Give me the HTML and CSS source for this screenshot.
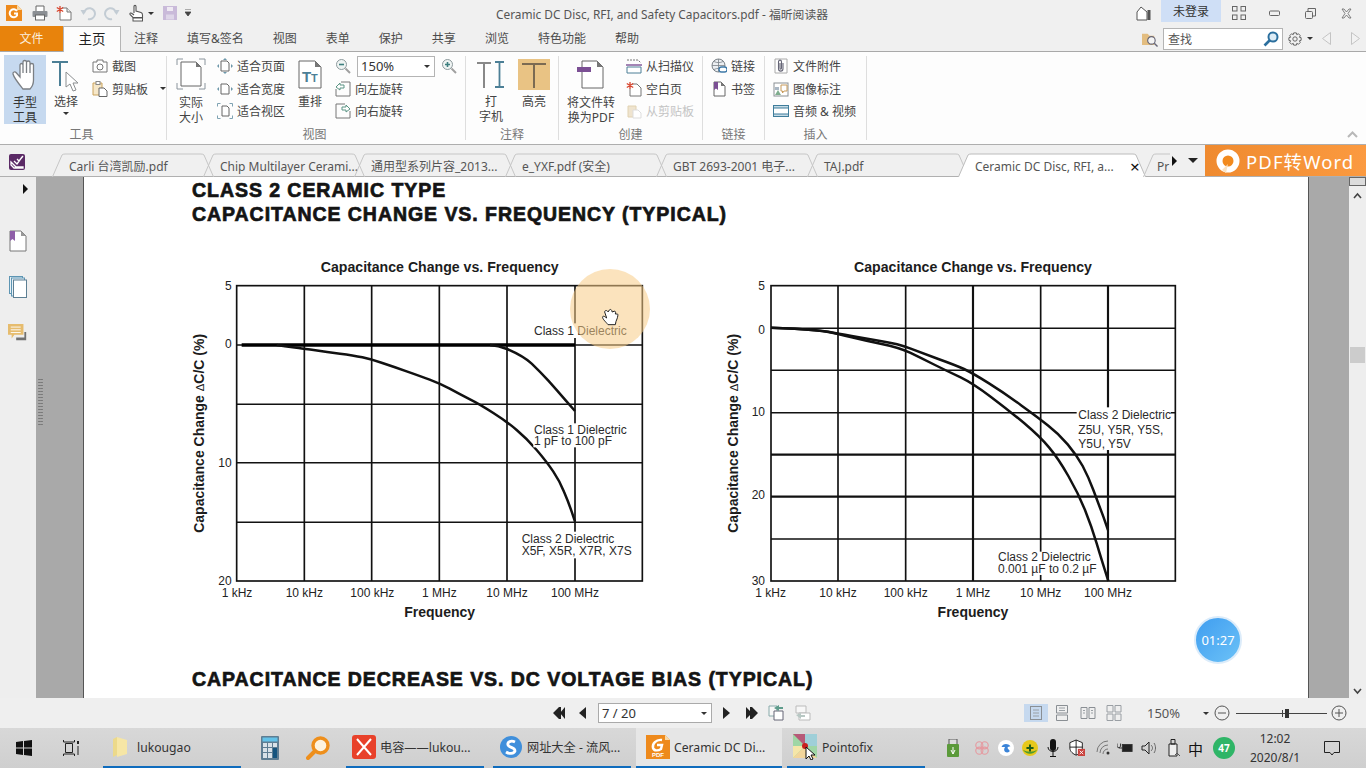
FILE: index.html
```html
<!DOCTYPE html>
<html lang="zh">
<head>
<meta charset="utf-8">
<title>Ceramic DC Disc, RFI, and Safety Capacitors.pdf - 福昕阅读器</title>
<link rel="stylesheet" href="styles.css">
</head>
<body>
<div class="app">
  <header class="titlebar">
    <div class="qa">
      <svg class="i16" viewBox="0 0 16 16"><path d="M0 0H11L16 5V16H0Z" fill="#ee8a1c"/><path d="M11 0L16 5H11Z" fill="#f8d9a8"/><path d="M11 6A4 4 0 1 0 11 10.500V8.500H8" fill="none" stroke="#fff" stroke-width="2"/></svg>
      <svg class="i16 ml10" viewBox="0 0 16 16"><path d="M4 6V1H12V6" fill="#fff" stroke="#666"/><rect x="0.500" y="6" width="15" height="6" rx="1" fill="#8b8f94"/><rect x="3.500" y="10" width="9" height="5" fill="#fff" stroke="#666"/></svg>
      <svg class="i16 ml8" viewBox="0 0 16 16"><path d="M6 3H11L15 7V15H4V8" fill="#fff" stroke="#777"/><path d="M11 3V7H15" fill="#eee" stroke="#777"/><path d="M4 1V8M0.800 2.500L7.200 6.500M7.200 2.500L0.800 6.500" stroke="#d8452e" stroke-width="1.300"/></svg>
      <svg class="i16 ml8" viewBox="0 0 16 16"><path d="M4 8A5.500 5.500 0 1 1 8 14" fill="none" stroke="#c3ccd4" stroke-width="2"/><path d="M0.500 5H6.500L3.500 10Z" fill="#c3ccd4"/></svg>
      <svg class="i16 ml8" viewBox="0 0 16 16"><path d="M12 8A5.500 5.500 0 1 0 8 14" fill="none" stroke="#c3ccd4" stroke-width="2"/><path d="M9.500 5H15.500L12.500 10Z" fill="#c3ccd4"/></svg>
      <svg class="i18 ml8" viewBox="0 0 18 18"><path d="M6 9V2.500C6 1 8 1 8 2.500V7L13 8.500C14.500 9 14.500 10 14.500 11V13.500H5L2 10.500C1.500 9 3 8.500 4 9.500L6 11" fill="#fff" stroke="#555" stroke-width="1.100"/><rect x="5" y="14" width="9.500" height="3" fill="#fff" stroke="#555"/></svg>
      <span class="caret-s"></span>
      <svg class="i14 ml9" viewBox="0 0 14 14"><path d="M0 0H14V14H0Z" fill="#c9bad9"/><rect x="4" y="1" width="6" height="4" fill="#efeaf3"/><rect x="3" y="8.500" width="8" height="5" fill="#ded6e8"/></svg>
      <svg class="qa-more" viewBox="0 0 6 8"><path d="M0 0H6M0 3H6L3 7Z" fill="#444" stroke="#444" stroke-width="0.800"/></svg>
    </div>
    <div class="doc-title">Ceramic DC Disc, RFI, and Safety Capacitors.pdf - 福昕阅读器</div>
    <div class="win">
      <svg class="i16" viewBox="0 0 16 16"><path d="M1 7L5 2L11 7V15H1Z" fill="#fff" stroke="#555"/><rect x="11.500" y="5" width="3" height="10" fill="#555"/></svg>
      <div class="login">未登录</div>
      <svg class="i14" viewBox="0 0 14 14"><g fill="none" stroke="#666"><rect x="0.500" y="0.500" width="4.500" height="4.500"/><rect x="9" y="0.500" width="4.500" height="4.500"/><rect x="0.500" y="9" width="4.500" height="4.500"/><rect x="9" y="9" width="4.500" height="4.500"/></g></svg>
      <svg class="i11 ml23" viewBox="0 0 11 11"><rect x="0.500" y="3" width="10" height="4.500" rx="1" fill="none" stroke="#666"/></svg>
      <svg class="i11 ml25" viewBox="0 0 11 11"><rect x="0.500" y="3.500" width="7" height="7" rx="1" fill="#eee" stroke="#666"/><path d="M3 3V0.500H10.500V8H8" fill="none" stroke="#666"/></svg>
      <svg class="i11 ml25" viewBox="0 0 11 11"><path d="M1 1H3L5.500 4L8 1H10L7 5.500L10 10H8L5.500 7L3 10H1L4 5.500Z" fill="#f3f3f3" stroke="#666" stroke-width="0.800"/></svg>
    </div>
  </header>

  <nav class="menubar">
    <div class="menu-file">文件</div>
    <div class="menu-item active">主页</div>
    <div class="menu-item first">注释</div>
    <div class="menu-item">填写&amp;签名</div>
    <div class="menu-item">视图</div>
    <div class="menu-item">表单</div>
    <div class="menu-item">保护</div>
    <div class="menu-item">共享</div>
    <div class="menu-item">浏览</div>
    <div class="menu-item">特色功能</div>
    <div class="menu-item">帮助</div>
    <div class="menu-tools">
      <svg class="i16" viewBox="0 0 17 17"><path d="M0 3H6L8 5H13V15H0Z" fill="#e3bd80"/><circle cx="10" cy="10" r="4" fill="#f4f4f4" stroke="#667" stroke-width="1.200"/><path d="M13 13L16.500 16.500" stroke="#667" stroke-width="1.500"/></svg>
      <div class="search"><span>查找</span><svg class="i16" viewBox="0 0 16 16"><circle cx="10" cy="6" r="4.500" fill="#dcecf6" stroke="#2b6f9e" stroke-width="2"/><path d="M6.500 9.500L1.500 14.500" stroke="#2b6f9e" stroke-width="2.600"/></svg></div>
      <svg class="i14 ml5" viewBox="0 0 16 16"><circle cx="8" cy="8" r="2.500" fill="none" stroke="#555"/><path d="M6.500 1H9.500L10 3L12 2L14 4.200L13 6L15 6.500V9.500L13 10L14 12L12 14L10 13L9.500 15H6.500L6 13L4 14L2 12L3 10L1 9.500V6.500L3 6L2 4.200L4 2L6 3Z" fill="none" stroke="#555"/></svg>
      <span class="caret-s ml5"></span>
      <svg class="nav-tri ml9" viewBox="0 0 9 13"><path d="M8.500 0.500V12.500L0.500 6.500Z" fill="#f2f2f2" stroke="#c4c4c4"/></svg>
      <svg class="nav-tri ml20" viewBox="0 0 9 13"><path d="M0.500 0.500V12.500L8.500 6.500Z" fill="#f2f2f2" stroke="#c4c4c4"/></svg>
    </div>
  </nav>

  <section class="ribbon">
    <div class="group g-tools">
      <div class="group-body">
        <div class="big hand-btn">
          <svg class="i36" viewBox="0 0 36 36"><path d="M12 32C8 27 3 21 2 17C1.500 15 4 14 5.500 16L9 20V8C9 6 12 6 12 8V16V5C12 3 15.500 3 15.500 5V16V5.500C15.500 3.500 19 3.500 19 5.500V16V8C19 6 22.500 6 22.500 8V23C22.500 27 21 30 19 32Z" transform="translate(4 0)" fill="#fff" stroke="#7b7f84" stroke-width="1.300"/></svg>
          <span>手型<br>工具</span>
        </div>
        <div class="big sel-btn">
          <svg class="i30" viewBox="0 0 30 32"><path d="M1 2H17M9 2V26" stroke="#4c7f96" stroke-width="2" fill="none"/><path d="M15 12V27L19 24L22 31L25 30L22 23H27Z" fill="#fff" stroke="#8b8e90"/></svg>
          <span class="sel-text">选择</span>
          <span class="caret-s sel-caret"></span>
        </div>
        <div class="col col-tools">
          <div class="row"><svg class="i16" viewBox="0 0 16 16"><path d="M1 4H5V2H11V4H15V14H1Z" fill="#fff" stroke="#777"/><circle cx="8" cy="9" r="3" fill="none" stroke="#777"/></svg><span>截图</span></div>
          <div class="row"><svg class="i16" viewBox="0 0 16 16"><path d="M3 2H10V14H1V2Z" fill="#f6e7c8" stroke="#caa35c"/><rect x="4" y="0.500" width="4" height="3" fill="#fff" stroke="#888"/><path d="M7 7H12L15 10V15.500H7Z" fill="#fff" stroke="#666"/></svg><span>剪贴板</span><span class="caret-s ml8"></span></div>
        </div>
      </div>
      <div class="group-label">工具</div>
    </div>

    <div class="group g-view">
      <div class="group-body">
        <div class="big act-btn">
          <svg class="i30" viewBox="0 0 30 32"><path d="M1 7V1H7M23 1H29V7M29 25V31H23M7 31H1V25" fill="none" stroke="#8a949c"/><path d="M5 4H20L25 9V28H5Z" fill="#fff" stroke="#666"/><path d="M20 4V9H25Z" fill="#777"/></svg>
          <span>实际<br>大小</span>
        </div>
        <div class="col col-fit">
          <div class="row"><svg class="i16" viewBox="0 0 16 16"><path d="M4 3H10L12 5V13H4Z" fill="#fff" stroke="#666"/><path d="M8 0L10 2H6ZM8 16L10 14H6ZM0 8L2 6V10ZM16 8L14 6V10Z" fill="#6d97aa"/></svg><span>适合页面</span></div>
          <div class="row"><svg class="i16" viewBox="0 0 16 16"><path d="M4 3H10L12 5V13H4Z" fill="#fff" stroke="#666"/><path d="M0 8L2 6V10ZM16 8L14 6V10Z" fill="#6d97aa"/></svg><span>适合宽度</span></div>
          <div class="row"><svg class="i16" viewBox="0 0 16 16"><path d="M5 3H10L12 5V13H5Z" fill="#fff" stroke="#666"/><path d="M0.500 3.500V0.500H3.500M12.500 0.500H15.500V3.500M15.500 12.500V15.500H12.500M3.500 15.500H0.500V12.500" fill="none" stroke="#7fa3b3"/></svg><span>适合视区</span></div>
        </div>
        <div class="big reflow-btn">
          <svg class="i30 reflow-ic" viewBox="0 0 24 30"><path d="M1 1H17L23 7V28H1Z" fill="#fff" stroke="#666"/><path d="M17 1V7H23Z" fill="#777"/><text class="tt1" x="4" y="22">T</text><text class="tt2" x="13" y="22">T</text></svg>
          <span>重排</span>
        </div>
        <div class="col col-zoom">
          <div class="row zoom-row">
            <svg class="i16" viewBox="0 0 16 16"><circle cx="6.500" cy="6.500" r="5" fill="#eff4f3" stroke="#8d9a9d"/><path d="M4 6.500H9" stroke="#3d7f7f" stroke-width="1.600"/><path d="M10.500 10.500L15 15" stroke="#a0a0a0" stroke-width="2"/></svg>
            <div class="zoom-select">150%<span class="caret-s"></span></div>
            <svg class="i16" viewBox="0 0 16 16"><circle cx="6.500" cy="6.500" r="5" fill="#eff4f3" stroke="#8d9a9d"/><path d="M4 6.500H9M6.500 4V9" stroke="#3d7f7f" stroke-width="1.600"/><path d="M10.500 10.500L15 15" stroke="#a0a0a0" stroke-width="2"/></svg>
          </div>
          <div class="row"><svg class="i16" viewBox="0 0 16 16"><path d="M6 1H15V15H6M1 8V15H6" fill="none" stroke="#777"/><path d="M1 6L5 2V4H9V7H5V9Z" fill="#fff" stroke="#5b9484"/></svg><span>向左旋转</span></div>
          <div class="row"><svg class="i16" viewBox="0 0 16 16"><path d="M10 1H1V15H15V8" fill="none" stroke="#777"/><path d="M15 6L11 2V4H7V7H11V9Z" fill="#fff" stroke="#5b9484"/></svg><span>向右旋转</span></div>
        </div>
      </div>
      <div class="group-label">视图</div>
    </div>

    <div class="group g-note">
      <div class="group-body">
        <div class="big type-btn">
          <svg class="i36 type-ic" viewBox="0 0 30 30"><path d="M1 3H15M8 3V28" fill="none" stroke="#888" stroke-width="2"/><path d="M19 2H28M23.500 2V27M19 27H28" fill="none" stroke="#4c7f96" stroke-width="1.800"/></svg>
          <span>打<br>字机</span>
        </div>
        <div class="big mark-btn">
          <div class="mark-ic"><svg class="i30" viewBox="0 0 30 30"><path d="M3 4H27M15 4V28" fill="none" stroke="#7b6a52" stroke-width="2"/></svg></div>
          <span>高亮</span>
        </div>
      </div>
      <div class="group-label">注释</div>
    </div>

    <div class="group g-create">
      <div class="group-body">
        <div class="big conv-btn">
          <svg class="i30 conv-ic" viewBox="0 0 28 30"><path d="M5 1H20L26 7V28H5Z" fill="#fff" stroke="#666"/><path d="M20 1V7H26Z" fill="#777"/><rect x="0" y="7" width="14" height="5" fill="#7b4f94"/></svg>
          <span>将文件转<br>换为PDF</span>
        </div>
        <div class="col col-create">
          <div class="row"><svg class="i16" viewBox="0 0 16 16"><path d="M1 2H12L15 5" fill="none" stroke="#777" stroke-dasharray="2 1"/><path d="M1 9H15V15H1Z" fill="#fff" stroke="#4c7f96"/><path d="M0 7H16" stroke="#7b4f94" stroke-width="1.400"/></svg><span>从扫描仪</span></div>
          <div class="row"><svg class="i16" viewBox="0 0 16 16"><path d="M6 3H11L15 7V15H4V8" fill="#fff" stroke="#777"/><path d="M4 1V8M0.800 2.500L7.200 6.500M7.200 2.500L0.800 6.500" stroke="#d8452e" stroke-width="1.300"/></svg><span>空白页</span></div>
          <div class="row off"><svg class="i16" viewBox="0 0 16 16"><path d="M2 3H10V14H2Z" fill="#efe4cf" stroke="#e1d2b2"/><path d="M7 7H12L15 10V15H7Z" fill="#fff" stroke="#ddd"/></svg><span>从剪贴板</span></div>
        </div>
      </div>
      <div class="group-label">创建</div>
    </div>

    <div class="group g-link">
      <div class="group-body">
        <div class="col col-link">
          <div class="row"><svg class="i16" viewBox="0 0 16 16"><circle cx="7.500" cy="7.500" r="6.500" fill="#eceff2" stroke="#7b8288"/><path d="M1 7.500H14M7.500 1V14M3 3.500C6 5 9 5 12 3.500M3 11.500C6 10 9 10 12 11.500" stroke="#7b8288" fill="none" stroke-width="0.800"/><rect x="8" y="9" width="8" height="5" rx="2.500" fill="#fff" stroke="#3e79a8" stroke-width="1.300"/></svg><span>链接</span></div>
          <div class="row"><svg class="i16" viewBox="0 0 16 16"><path d="M3 1H10L14 5V15H3Z" fill="#fff" stroke="#666"/><path d="M10 1V5H14Z" fill="#777"/><path d="M3 1H7V9L5 7.500L3 9Z" fill="#7b4f94"/></svg><span>书签</span></div>
        </div>
      </div>
      <div class="group-label">链接</div>
    </div>

    <div class="group g-insert">
      <div class="group-body">
        <div class="col col-insert">
          <div class="row"><svg class="i16" viewBox="0 0 16 16"><path d="M2 1H14V15H2Z" fill="#fff" stroke="#aaa"/><path d="M10 5V10.500C10 14 5.500 14 5.500 10.500V4C5.500 1.500 8.500 1.500 8.500 4V10C8.500 11.500 7 11.500 7 10V5" fill="none" stroke="#667" stroke-width="1.100"/></svg><span>文件附件</span></div>
          <div class="row"><svg class="i16" viewBox="0 0 16 16"><rect x="1" y="2" width="14" height="13" fill="#fff" stroke="#8a9094"/><path d="M2 14L5 9L8 14Z" fill="#7fae8e"/><rect x="2" y="6" width="4" height="3" fill="#a9b7c4"/><path d="M8 4H14V10H11L9.500 12V10H8Z" fill="#fff" stroke="#c79a5a"/></svg><span>图像标注</span></div>
          <div class="row"><svg class="i16" viewBox="0 0 16 16"><rect x="0.500" y="2.500" width="15" height="11" fill="#fff" stroke="#3f7d9b"/><rect x="0.500" y="2.500" width="15" height="2.500" fill="#c5dbe6" stroke="#3f7d9b"/><rect x="0.500" y="11" width="15" height="2.500" fill="#c5dbe6" stroke="#3f7d9b"/></svg><span>音频 &amp; 视频</span></div>
        </div>
      </div>
      <div class="group-label">插入</div>
    </div>

    <svg class="collapse" viewBox="0 0 11 7"><path d="M1 6L5.500 1.500L10 6" fill="none" stroke="#b8b8b8" stroke-width="2"/></svg>
  </section>

  <section class="tabbar">
    <svg class="tabs-logo" viewBox="0 0 16 16"><rect width="16" height="16" rx="2" fill="#5b2a66"/><path d="M2 8L7 13H14V14H5L2 11ZM5 7L8 10L13 3M8 5L10 7L14 2" fill="none" stroke="#fff" stroke-width="1.300"/></svg>
    <div class="tabs">
      <div class="tab"><svg class="tab-shape" viewBox="0 0 162 25"><path d="M0 25L10 2Q11 1 13 1H149Q151 1 152 2L162 25"/></svg><span>Carli 台湾凯励.pdf</span></div>
      <div class="tab"><svg class="tab-shape" viewBox="0 0 162 25"><path d="M0 25L10 2Q11 1 13 1H149Q151 1 152 2L162 25"/></svg><span>Chip Multilayer Cerami...</span></div>
      <div class="tab"><svg class="tab-shape" viewBox="0 0 162 25"><path d="M0 25L10 2Q11 1 13 1H149Q151 1 152 2L162 25"/></svg><span>通用型系列片容_2013...</span></div>
      <div class="tab"><svg class="tab-shape" viewBox="0 0 162 25"><path d="M0 25L10 2Q11 1 13 1H149Q151 1 152 2L162 25"/></svg><span>e_YXF.pdf (安全)</span></div>
      <div class="tab"><svg class="tab-shape" viewBox="0 0 162 25"><path d="M0 25L10 2Q11 1 13 1H149Q151 1 152 2L162 25"/></svg><span>GBT 2693-2001 电子...</span></div>
      <div class="tab"><svg class="tab-shape" viewBox="0 0 162 25"><path d="M0 25L10 2Q11 1 13 1H149Q151 1 152 2L162 25"/></svg><span>TAJ.pdf</span></div>
      <div class="tab tab-active"><svg class="tab-shape" viewBox="0 0 188 25"><path d="M0 25L10 2Q11 1 13 1H175Q177 1 178 2L188 25"/></svg><span>Ceramic DC Disc, RFI, a...</span><b class="tab-x">×</b></div>
      <div class="tab tab-last"><svg class="tab-shape" viewBox="0 0 162 25"><path d="M0 25L10 2Q11 1 13 1H149Q151 1 152 2L162 25"/></svg><span>Pr</span></div>
    </div>
    <div class="tab-arrows"><span class="tri-r"></span><span class="tri-d"></span></div>
    <div class="promo">
      <svg class="promo-ic" viewBox="0 0 24 24"><circle cx="12" cy="12" r="8.500" fill="#f28a1e" stroke="#fff" stroke-width="6"/><path d="M6 21L12 15L10 24Z" fill="#fbe2c2"/></svg>
      <span>PDF转Word</span>
    </div>
  </section>

  <main class="workspace">
    <aside class="sidebar">
      <span class="tri-r side-tri"></span>
      <svg class="side-ic first-ic" viewBox="0 0 18 22"><path d="M1 1H12L17 6V21H1Z" fill="#fff" stroke="#777"/><path d="M12 1V6H17Z" fill="#999"/><path d="M1 1H6V11L3.500 9L1 11Z" fill="#8f5fa8"/></svg>
      <svg class="side-ic" viewBox="0 0 18 22"><rect x="0.500" y="0.500" width="13" height="17" fill="#e8f1f6" stroke="#5d95b3"/><rect x="2.500" y="2" width="13" height="18" fill="#e8f1f6" stroke="#5d95b3"/><rect x="4.500" y="4" width="13" height="17.500" fill="#fff" stroke="#5d7f93"/></svg>
      <svg class="side-ic" viewBox="0 0 22 20"><path d="M0 0H17V12H7L4 16V12H0Z" fill="#e6bc6e"/><path d="M3 3.500H14M3 6.500H14M3 9.500H14" stroke="#fff"/><path d="M20 9V18H9V15H18V9Z" fill="#717171"/></svg>
    </aside>
    <div class="gutter gutter-left"><div class="grip"></div></div>
    <article class="page">
      <h2 class="pdf-h">CLASS 2 CERAMIC TYPE</h2>
      <h2 class="pdf-h">CAPACITANCE CHANGE VS. FREQUENCY (TYPICAL)</h2>
      <div class="charts">
        <svg class="chart" viewBox="0 0 1440 1140">
          <text class="c-title" x="779" y="66">Capacitance Change vs. Frequency</text>
          <g class="grid">
            <path d="M373 107V993M575 107V993M778 107V993M981 107V993M1185 107V993"/>
            <path class="thin" d="M170 463H1387M170 638H1387M170 817H1387M170 285H1387"/>
            <rect class="frame" x="170" y="107" width="1217" height="886"/>
          </g>
          <path class="thick" d="M185 285H1185"/>
          <path class="curve" d="M290 285L315 289Q340 293 356 294Q373 296 406 301Q440 307 480 311Q520 316 547 322Q575 328 607 339Q640 350 680 364Q720 378 749 389Q778 400 809 416Q840 433 870 448Q900 463 940 489Q981 515 1010 540Q1040 565 1070 600Q1100 635 1120 665Q1140 695 1152 725Q1165 755 1175 785L1185 815"/>
          <path class="curve" d="M930 285Q955 287 981 297Q1030 318 1055 341Q1080 365 1105 392Q1130 420 1157 451L1185 483"/>
          <rect class="mask" x="1060" y="220" width="285" height="44"/>
          <rect class="mask" x="1060" y="520" width="285" height="72"/>
          <rect class="mask" x="1022" y="845" width="340" height="80"/>
          <text class="c-label" x="1062" y="254">Class 1 Dielectric</text>
          <text class="c-label" x="1062" y="551">Class 1 Dielectric</text>
          <text class="c-label" x="1062" y="584">1 pF to 100 pF</text>
          <text class="c-label" x="1025" y="878">Class 2 Dielectric</text>
          <text class="c-label" x="1025" y="914">X5F, X5R, X7R, X7S</text>
          <g class="c-ytick"><text x="155" y="120">5</text><text x="155" y="295">0</text><text x="155" y="650">10</text><text x="155" y="1004">20</text></g>
          <g class="c-xtick"><text x="171" y="1040">1 kHz</text><text x="373" y="1040">10 kHz</text><text x="577" y="1040">100 kHz</text><text x="778" y="1040">1 MHz</text><text x="981" y="1040">10 MHz</text><text x="1185" y="1040">100 MHz</text></g>
          <text class="c-axis" x="779" y="1102">Frequency</text>
          <text class="c-axis" transform="translate(73 550) rotate(-90)">Capacitance Change <tspan class="c-delta">Δ</tspan>C/C (%)</text>
          <circle class="spot" cx="1290" cy="177" r="120"/>
          <path class="hand" d="M1284 224C1276 214 1266 206 1268 200C1272 196 1276 202 1280 204L1274 186C1274 180 1282 180 1284 186L1288 180C1292 176 1296 180 1296 186L1302 184C1306 182 1308 186 1306 192L1312 192C1316 192 1312 206 1308 214L1306 224Z"/>
        </svg>
        <svg class="chart chart-2" viewBox="0 0 1440 1140">
          <text class="c-title" x="774" y="66">Capacitance Change vs. Frequency</text>
          <g class="grid">
            <path d="M369 107V993M572 107V993M977 107V993"/>
            <path class="med" d="M774 107V993M1179 107V993"/>
            <path class="thin" d="M168 235H1381M168 361H1381M168 488H1381M168 867H1381"/>
            <path class="med" d="M168 614H1381M168 740H1381"/>
            <rect class="frame" x="168" y="107" width="1213" height="886"/>
          </g>
          <path class="curve" d="M168 233L239 236Q310 240 340 245Q369 250 410 258Q450 265 500 274Q550 282 585 295Q620 308 670 327Q720 345 747 357Q774 370 822 400Q870 430 920 467Q970 503 1000 527Q1030 550 1058 583Q1085 615 1103 648Q1120 680 1135 720Q1150 760 1165 800L1179 840"/>
          <path class="curve" d="M168 233L239 236Q310 240 340 246Q369 252 410 262Q450 272 500 282Q550 292 585 308Q620 325 660 345Q700 365 737 382Q774 400 827 440Q880 480 928 520Q975 560 1002 592Q1030 625 1060 678Q1090 730 1110 780Q1130 830 1145 880Q1160 930 1180 993"/>
          <rect class="mask" x="1085" y="472" width="282" height="128"/>
          <rect class="mask" x="846" y="905" width="295" height="70"/>
          <text class="c-label" x="1090" y="508">Class 2 Dielectric</text>
          <text class="c-label" x="1090" y="551">Z5U, Y5R, Y5S,</text>
          <text class="c-label" x="1090" y="593">Y5U, Y5V</text>
          <text class="c-label" x="849" y="932">Class 2 Dielectric</text>
          <text class="c-label" x="849" y="968">0.001 µF to 0.2 µF</text>
          <g class="c-ytick"><text x="150" y="120">5</text><text x="150" y="252">0</text><text x="150" y="498">10</text><text x="150" y="746">20</text><text x="150" y="1004">30</text></g>
          <g class="c-xtick"><text x="167" y="1040">1 kHz</text><text x="369" y="1040">10 kHz</text><text x="572" y="1040">100 kHz</text><text x="774" y="1040">1 MHz</text><text x="977" y="1040">10 MHz</text><text x="1179" y="1040">100 MHz</text></g>
          <text class="c-axis" x="774" y="1102">Frequency</text>
          <text class="c-axis" transform="translate(70 550) rotate(-90)">Capacitance Change <tspan class="c-delta">Δ</tspan>C/C (%)</text>
        </svg>
      </div>
      <h2 class="pdf-h pdf-h2">CAPACITANCE DECREASE VS. DC VOLTAGE BIAS (TYPICAL)</h2>
      <div class="timer">01:27</div>
    </article>
    <div class="gutter gutter-right"></div>
    <div class="scrollbar">
      <div class="sb-top"></div>
      <svg class="sb-chev" viewBox="0 0 9 7"><path d="M1 6L4.500 2L8 6" fill="none" stroke="#444" stroke-width="1.600"/></svg>
      <div class="sb-thumb"></div>
      <svg class="sb-chev sb-down" viewBox="0 0 9 7"><path d="M1 1L4.500 5L8 1" fill="none" stroke="#444" stroke-width="1.600"/></svg>
    </div>
  </main>

  <footer class="statusbar">
    <div class="pager">
      <svg class="nav-ic" viewBox="0 0 14 14"><path d="M7 1V13L1 7ZM13 1V13L8 7Z" fill="#222"/><rect x="7" y="1" width="2" height="12" fill="#222"/></svg>
      <svg class="nav-ic nav-one ml12" viewBox="0 0 9 14"><path d="M8 1V13L1 7Z" fill="#222"/></svg>
      <div class="page-box">7 / 20<span class="caret-s"></span></div>
      <svg class="nav-ic nav-one ml10" viewBox="0 0 9 14"><path d="M1 1V13L8 7Z" fill="#222"/></svg>
      <svg class="nav-ic ml14" viewBox="0 0 14 14"><path d="M1 1V13L7 7ZM7 1V13L13 7Z" fill="#222"/><rect x="5" y="1" width="2" height="12" fill="#222"/></svg>
      <svg class="i16 ml9" viewBox="0 0 16 16"><path d="M1 1H9V11H1Z" fill="#f7f7f7" stroke="#8aa"/><path d="M6 6H15V15H6Z" fill="#fff" stroke="#667"/><path d="M6 3L11 0V2H15V4H11V6Z" fill="#5f9c8c"/></svg>
      <svg class="i16 ml11" viewBox="0 0 16 16"><path d="M1 1H11V8H1Z" fill="#f7f7f7" stroke="#bbb"/><path d="M4 8H15V15H4Z" fill="#fff" stroke="#bbb"/><path d="M1 10L6 8V10H10V12H6V14Z" fill="#b8c8c4"/></svg>
    </div>
    <div class="view-tools">
      <div class="vt vt-on"><svg class="i16" viewBox="0 0 16 16"><rect x="2.500" y="1.500" width="11" height="13" fill="none" stroke="#8a8f94"/><path d="M5 5H11M5 8H11M5 11H11" stroke="#9aa0a5"/></svg></div>
      <div class="vt"><svg class="i16" viewBox="0 0 16 16"><path d="M2.500 0.500H13.500V8H2.500ZM2.500 10H13.500V15.500H2.500Z" fill="none" stroke="#8a8f94"/><path d="M5 3H11M5 5.500H11" stroke="#9aa0a5"/></svg></div>
      <div class="vt"><svg class="i16" viewBox="0 0 16 16"><path d="M1 2.500H7V13.500H1ZM9 2.500H15V13.500H9Z" fill="none" stroke="#8a8f94"/><path d="M3 5.500H5M3 8H5M11 5.500H13M11 8H13" stroke="#9aa0a5"/></svg></div>
      <div class="vt"><svg class="i16" viewBox="0 0 16 16"><path d="M1 0.500H7V7H1ZM9 0.500H15V7H9ZM1 9H7V15.500H1ZM9 9H15V15.500H9Z" fill="none" stroke="#9a9fa4"/></svg></div>
      <span class="zoom-val">150%</span>
      <span class="caret-s zoom-caret"></span>
      <svg class="circ circ-minus" viewBox="0 0 16 16"><circle cx="8" cy="8" r="7" fill="none" stroke="#555"/><path d="M4 8H12" stroke="#555"/></svg>
      <div class="slider"><div class="slider-mark"></div><div class="slider-knob"></div></div>
      <svg class="circ circ-plus" viewBox="0 0 16 16"><circle cx="8" cy="8" r="7" fill="none" stroke="#555"/><path d="M4 8H12M8 4V12" stroke="#555"/></svg>
    </div>
  </footer>

  <div class="taskbar">
    <svg class="win-logo" viewBox="0 0 16 16"><path d="M0 2L7 1V7.500H0ZM8 1L16 0V7.500H8ZM0 8.500H7V15L0 14ZM8 8.500H16V16L8 15Z" fill="#111"/></svg>
    <svg class="tv-ic" viewBox="0 0 17 16"><path d="M0.500 0V2H11.500V0M2.500 3.500H9.500V12.500H2.500ZM0.500 16V14H11.500V16" fill="none" stroke="#222"/><rect x="14" y="1" width="2" height="3" fill="#222"/><rect x="14.500" y="6" width="1" height="9" fill="#222"/></svg>
    <div class="task t-folder"><svg class="t-ic" viewBox="0 0 16 20"><path d="M1 2L5 0V18L1 20Z" fill="#ecd98a"/><path d="M5 0L15 3V17L5 20Z" fill="#f6e6a5"/></svg><span>lukougao</span></div>
    <svg class="pin calc" viewBox="0 0 18 24"><rect width="18" height="24" rx="1" fill="#5e7d92"/><rect x="1.500" y="1.500" width="15" height="4" fill="#63c2e8"/><g fill="#d9e2e8"><rect x="2" y="7" width="4" height="4"/><rect x="7" y="7" width="4" height="4"/><rect x="12" y="7" width="4" height="4"/><rect x="2" y="12" width="4" height="4"/><rect x="7" y="12" width="4" height="4"/><rect x="2" y="17" width="4" height="5"/><rect x="7" y="17" width="4" height="5"/></g><rect x="12" y="12" width="4" height="10" fill="#15547e"/></svg>
    <svg class="pin mag" viewBox="0 0 24 24"><circle cx="14.500" cy="9.500" r="7.500" fill="#fdf3df" stroke="#ee8f1c" stroke-width="3.400"/><path d="M9 15L2 22" stroke="#ee8f1c" stroke-width="4" stroke-linecap="round"/></svg>
    <div class="task t-x"><svg class="t-ic24" viewBox="0 0 24 24"><rect width="24" height="24" rx="3" fill="#e8412a"/><path d="M5 4L19 20M19 4L5 20" stroke="#fff" stroke-width="2"/></svg><span>电容——lukou...</span></div>
    <div class="task t-s"><svg class="t-ic22" viewBox="0 0 22 22"><circle cx="11" cy="11" r="11" fill="#3f8fdb"/><path d="M15 6C11 4 7 6 8 9C9 12 15 11 15 15C14 18 9 18 6 16" fill="none" stroke="#fff" stroke-width="2.800"/></svg><span>网址大全 - 流风...</span></div>
    <div class="task t-active"><svg class="t-ic24" viewBox="0 0 24 24"><path d="M0 0H19L24 5V24H0Z" fill="#ee8a1c"/><path d="M19 0L24 5H19Z" fill="#f8d9a8"/><path d="M16 5C10 4 6 9 7 13C8 16 12 16 15 14L16 10H11" fill="none" stroke="#fff" stroke-width="2.400"/><text class="t-pdf" x="12" y="22">PDF</text></svg><span>Ceramic DC Di...</span></div>
    <div class="task t-point"><svg class="t-ic24 point-ic" viewBox="0 0 24 26"><rect width="24" height="24" fill="#9fd6a5"/><path d="M0 0H12L12 12Z" fill="#b65a78"/><path d="M12 0H24V12L12 12Z" fill="#9fcfd8"/><path d="M0 12L12 12L0 24Z" fill="#f5e6a8"/><path d="M0 24L12 12L24 24Z" fill="#f2d59a"/><circle cx="12" cy="12" r="3" fill="#c91e1e"/><path d="M13 13V25L16 22L18 26L20 25L18 21H22Z" fill="#fff" stroke="#111"/></svg><span>Pointofix</span></div>
    <div class="tray">
      <svg class="tr" viewBox="0 0 12 18"><rect x="2" y="0" width="8" height="6" fill="#ddd" stroke="#555"/><rect y="5" width="12" height="13" rx="1" fill="#5b9a3a"/><path d="M6 8V15M4 11L6 15L8 11" stroke="#fff" fill="none"/></svg>
      <svg class="tr tr2" viewBox="0 0 18 18"><g fill="none" stroke="#e59aa0" stroke-width="1.300"><circle cx="6" cy="6" r="4"/><circle cx="12" cy="6" r="4"/><circle cx="6" cy="12" r="4"/><circle cx="12" cy="12" r="4"/></g></svg>
      <svg class="tr tr3" viewBox="0 0 18 18"><circle cx="9" cy="9" r="9" fill="#fff"/><path d="M4 8C5 4 11 3 14 7L11 8C10 11 14 11 13 13C9 16 5 12 8 8Z" fill="#3b84d8"/></svg>
      <svg class="tr tr4" viewBox="0 0 18 18"><circle cx="9" cy="9" r="9" fill="#e7c81c"/><path d="M1 11C5 17 13 17 17 11C13 14 5 14 1 11Z" fill="#4c9a2f"/><path d="M5 9H13M9 5V13" stroke="#1f5c17" stroke-width="2.200"/></svg>
      <svg class="tr tr5" viewBox="0 0 12 18"><rect x="3" y="0" width="6" height="12" rx="3" fill="#111"/><path d="M1 8C1 14 11 14 11 8M6 13V17M3 17.500H9" fill="none" stroke="#111"/></svg>
      <svg class="tr tr6" viewBox="0 0 18 18"><path d="M8 0L15 3V9C15 13 11 16 8 17C5 16 1 13 1 9V3Z" fill="#fff" stroke="#111"/><path d="M8 0V17M1 8H15" stroke="#111"/><rect x="10" y="10" width="8" height="8" fill="#c9433e"/><path d="M12 12L16 16M16 12L12 16" stroke="#fff"/></svg>
      <svg class="tr tr7" viewBox="0 0 16 16"><g fill="none" stroke="#777"><path d="M1 12A11 11 0 0 1 12 1"/><path d="M4 13A8 8 0 0 1 12 5"/><path d="M7 14A5 5 0 0 1 12 9"/></g><circle cx="12" cy="13" r="1.500" fill="#333"/></svg>
      <svg class="tr tr8" viewBox="0 0 18 14"><rect x="6" y="3" width="11" height="8" fill="#222" stroke="#333"/><path d="M0 2V5C0 7 4 7 4 5V2M2 7H6" fill="none" stroke="#222"/></svg>
      <svg class="tr tr9" viewBox="0 0 16 14"><path d="M1 5H4L8 1V13L4 9H1Z" fill="none" stroke="#222"/><path d="M10 4C12 6 12 8 10 10M13 2C15 5 15 9 13 12" fill="none" stroke="#666"/></svg>
      <svg class="tr tr10" viewBox="0 0 14 18"><path d="M3 5H11V17H3Z" fill="#eee" stroke="#222"/><path d="M5 0.500H9V5H5Z" fill="none" stroke="#222"/><path d="M9 16L11 14L14 17" fill="none" stroke="#555"/></svg>
      <span class="ime">中</span>
      <div class="badge47"><span>47</span></div>
      <div class="clock"><span>12:02</span><span>2020/8/1</span></div>
      <svg class="notif" viewBox="0 0 16 16"><path d="M0.500 1.500H15.500V12.500H10L8 15L6 12.500H0.500Z" fill="none" stroke="#222"/></svg>
    </div>
  </div>
</div>
</body>
</html>
```

FILE: styles.css
```css
* { box-sizing: border-box; }
html, body { margin: 0; padding: 0; }
body { font-family: "Noto Sans", "Noto Sans CJK SC", sans-serif; font-size: 12px; color: #4a4a4a; background: #f0f0f0; overflow: hidden; }
.app { width: 1366px; height: 768px; display: flex; flex-direction: column; overflow: hidden; }
svg { display: block; flex: none; }

.i11 { width: 11px; height: 11px; }
.i14 { width: 14px; height: 14px; }
.i16 { width: 16px; height: 16px; }
.i18 { width: 18px; height: 18px; }
.i30 { width: 30px; height: 32px; }
.i36 { width: 36px; height: 36px; }
.ml5 { margin-left: 5px; }
.ml8 { margin-left: 8px; }
.ml9 { margin-left: 9px; }
.ml10 { margin-left: 10px; }
.ml11 { margin-left: 11px; }
.ml12 { margin-left: 12px; }
.ml14 { margin-left: 14px; }
.ml20 { margin-left: 20px; }
.ml23 { margin-left: 23px; }
.ml25 { margin-left: 25px; }

.caret-s { display: inline-block; flex: none; width: 0; height: 0; border-left: 3px solid transparent; border-right: 3px solid transparent; border-top: 3px solid #333; }

/* title bar */
.titlebar { height: 26px; flex: none; display: flex; align-items: center; background: #f0f0f0; position: relative; }
.qa { width: 496px; flex: none; display: flex; align-items: center; padding-left: 6px; }
.qa .caret-s { margin-left: 2px; }
.qa-more { width: 6px; height: 8px; margin-left: 8px; }
.doc-title { width: 331px; flex: none; white-space: nowrap; font-size: 11.850px; color: #555; }
.win { margin-left: auto; display: flex; align-items: center; padding-right: 14px; }
.login { width: 60px; height: 22px; margin: -4px 11px 0 9px; padding-top: 1px; background: #cfdff6; text-align: center; line-height: 22px; color: #333; font-size: 12px; }

/* menu */
.menubar { height: 26px; flex: none; display: flex; align-items: flex-end; background: #f0f0f0; border-bottom: 1px solid #a9a9a9; font-size: 12px; }
.menu-file { width: 63px; height: 25px; background: #e8830c; color: #fbeedd; text-align: center; line-height: 25px; font-size: 12px; }
.menu-item { height: 25px; padding: 0 14.500px; line-height: 25px; color: #4c4c4c; white-space: nowrap; }
.menu-item.first { margin-left: -1.500px; }
.menu-item.active { width: 58px; height: 26px; margin-left: 0; margin-bottom: -1px; padding: 0; text-align: center; background: #fdfdfd; border: 1px solid #b5b5b5; border-bottom: 0; font-size: 13.500px; color: #222; }
.menu-tools { margin-left: auto; height: 25px; display: flex; align-items: center; padding-right: 6px; }
.search { width: 120px; height: 22px; margin-left: 5px; background: #fff; border: 1px solid #b4b4b4; display: flex; align-items: center; justify-content: space-between; padding: 0 3px 0 4px; color: #555; }
.nav-tri { width: 9px; height: 13px; }

/* ribbon */
.ribbon { height: 93px; flex: none; display: flex; background: #fdfdfd; border-bottom: 1px solid #aeaeae; position: relative; font-size: 12px; }
.group { flex: none; height: 92px; padding-top: 3px; display: flex; flex-direction: column; position: relative; }
.group::after { content: ""; position: absolute; right: 0; top: 4px; bottom: 4px; width: 1px; background: #dedede; }
.group-body { height: 69px; display: flex; flex: none; }
.group-label { flex: 1; text-align: center; line-height: 22px; color: #777; padding-right: 1px; }
.g-tools { width: 167px; padding-left: 4px; }
.g-tools .group-label, .g-view .group-label { padding-right: 8px; }
.g-view { width: 299px; padding-left: 4px; }
.g-note { width: 93px; }
.g-create { width: 144px; }
.g-link { width: 62px; }
.g-insert { width: 102px; }
.big { flex: none; display: flex; flex-direction: column; align-items: center; text-align: center; line-height: 15px; color: #444; }
.hand-btn { width: 42px; height: 69px; background: #c6d9ef; padding-top: 2px; color: #333; }
.hand-btn svg { margin-bottom: 2px; }
.sel-btn { width: 32px; margin-left: 4px; padding-top: 5px; }
.sel-text { margin-top: 2px; }
.sel-caret { margin-top: 3px; }
.col { flex: none; display: flex; flex-direction: column; padding-top: 0; }
.row { height: 22.500px; display: flex; align-items: center; gap: 4px; white-space: nowrap; color: #444; }
.row.off { color: #c4c4c4; }
.col-tools { margin-left: 10px; }
.act-btn { width: 40px; padding-top: 3px; }
.act-btn span { margin-top: 5px; }
.col-fit { margin-left: 6px; }
.reflow-btn { width: 30px; margin-left: 10px; padding-top: 5px; }
.reflow-ic { width: 24px; height: 30px; }
.reflow-btn span { margin-top: 4px; }
.tt1, .tt2 { font: bold 15px "Liberation Sans", sans-serif; fill: #4c7f96; }
.tt2 { font-size: 11px; }
.col-zoom { margin-left: 10px; }
.zoom-row { gap: 6px; }
.zoom-select { width: 78px; height: 21px; background: #fff; border: 1px solid #b4b4b4; display: flex; align-items: center; justify-content: space-between; padding: 0 4px 0 3px; color: #333; font-size: 13px; }
.type-btn { width: 48px; margin-left: 1px; padding-top: 5px; }
.type-ic { width: 30px; height: 30px; margin-bottom: 4px; }
.mark-btn { width: 32px; margin-left: 3px; }
.mark-ic { width: 32px; height: 31px; margin-top: 4px; margin-bottom: 4px; background: #e9c384; display: flex; align-items: center; justify-content: center; }
.mark-ic .i30 { width: 30px; height: 30px; }
.conv-btn { width: 50px; margin-left: 7px; padding-top: 5px; }
.conv-ic { width: 28px; height: 30px; margin-bottom: 5px; }
.col-create { margin-left: 10px; }
.col-link { margin-left: 8px; }
.col-insert { margin-left: 8px; }
.collapse { position: absolute; right: 8px; bottom: 6px; width: 11px; height: 7px; }

/* tabs */
.tabbar { height: 32px; flex: none; display: flex; align-items: flex-end; background: #f0f0f0; border-bottom: 1px solid #b0b0b0; }
.tabs-logo { width: 16px; height: 16px; margin: 0 27px 6px 9px; }
.tabs { width: 1118px; height: 24px; margin-bottom: -1px; display: flex; overflow: hidden; flex: none; }
.tab { width: 151px; flex: none; height: 25px; position: relative; padding-left: 17px; line-height: 27px; white-space: nowrap; color: #555; }
.tab span { position: relative; }
.tab-shape { position: absolute; left: 0; top: 0; width: 162px; height: 25px; }
.tab-shape path { fill: none; stroke: #c6c6c6; }
.tab-active { width: 188px; }
.tab-active .tab-shape { width: 188px; z-index: 0; }
.tab-active .tab-shape path { fill: #fff; stroke: #bcbcbc; }
.tab-last { width: 40px; overflow: hidden; margin-left: -3px; padding-left: 14px; }
.tab-x { position: absolute; left: 172px; top: 0; font-size: 17px; color: #111; font-weight: 400; }
.tab-arrows { flex: none; width: 35px; height: 31px; display: flex; align-items: center; gap: 11px; padding-left: 2px; margin-top: -6px; }
.tri-r { display: block; flex: none; width: 0; height: 0; border-top: 5px solid transparent; border-bottom: 5px solid transparent; border-left: 5px solid #111; }
.tri-d { display: block; flex: none; width: 0; height: 0; border-left: 5px solid transparent; border-right: 5px solid transparent; border-top: 5px solid #222; }
.promo { flex: none; width: 161px; height: 31px; background: linear-gradient(90deg, #ef8a2f, #fb9a40); display: flex; align-items: center; padding-left: 11px; color: #fff; font-size: 18.500px; letter-spacing: 1.100px; }
.promo-ic { width: 24px; height: 24px; margin-right: 6px; }

/* workspace */
.workspace { height: 521px; flex: none; display: flex; }
.sidebar { width: 36px; flex: none; background: #eeeeee; display: flex; flex-direction: column; align-items: center; }
.side-tri { margin: 7px 0 0 15px; }
.side-ic { width: 20px; height: 22px; margin-top: 24px; }
.first-ic { margin-top: 36px; }
.gutter { flex: none; background: #a9a9a9; }
.gutter-left { width: 48px; border-right: 1px solid #555; }
.gutter-right { width: 41px; border-left: 1px solid #555; }
.grip { width: 5px; height: 48px; margin: 201px 0 0 2px; background-image: radial-gradient(circle, #777 0.800px, transparent 1px); background-size: 2.500px 3px; }
.page { flex: 1; background: #fff; position: relative; overflow: hidden; padding-top: 1px; }
.pdf-h { margin: 0 0 0 108px; height: 24px; font: 900 19.500px/24px "Liberation Sans", sans-serif; color: #141414; white-space: nowrap; -webkit-text-stroke: 0.700px #141414; letter-spacing: 0.950px; }
.pdf-h2 { margin-top: 37px; }
.charts { display: flex; margin: 24px 0 0 96px; }
.chart { width: 480px; height: 380px; }
.chart-2 { margin-left: 55px; }
.c-title { font: bold 42.400px "Liberation Sans", sans-serif; fill: #1c1c1c; text-anchor: middle; }
.grid path, .frame { fill: none; stroke: #111; stroke-width: 5; }
.grid .thin { stroke-width: 4.500; }
.grid .med { stroke-width: 6.500; }
.frame { stroke-width: 5; }
.thick { fill: none; stroke: #000; stroke-width: 11; }
.curve { fill: none; stroke: #111; stroke-width: 7.500; stroke-linejoin: round; }
.mask { fill: #fff; }
.c-label { font: 36px "Liberation Sans", sans-serif; fill: #2a2a2a; }
.c-ytick text { font: 36px "Liberation Sans", sans-serif; fill: #222; text-anchor: end; }
.c-xtick text { font: 36px "Liberation Sans", sans-serif; fill: #222; text-anchor: middle; }
.c-axis { font: bold 42px "Liberation Sans", sans-serif; fill: #1c1c1c; text-anchor: middle; }
.c-delta { font-weight: 400; font-size: 34px; }
.spot { fill: rgba(248, 204, 134, 0.55); }
.hand { fill: #fff; stroke: #222; stroke-width: 3; }
.timer { position: absolute; left: 1110px; top: 439px; width: 48px; height: 48px; border-radius: 50%; border: 2px solid #dcecfa; background: linear-gradient(135deg, #3f9df0, #6cc2f7); color: #fff; text-align: center; line-height: 44px; font-size: 13px; }
.scrollbar { width: 17px; flex: none; background: #eeeeee; display: flex; flex-direction: column; align-items: center; position: relative; }
.sb-top { width: 17px; height: 9px; background: #dcdcdc; border: 1px solid #666; }
.sb-chev { width: 9px; height: 7px; margin-top: 6px; }
.sb-thumb { width: 15px; height: 16px; margin-top: 148px; background: #cccccc; }
.sb-down { position: absolute; left: 4px; bottom: 3px; margin: 0; }

/* status bar */
.statusbar { height: 30px; flex: none; display: flex; background: #efefef; position: relative; }
.pager { display: flex; align-items: center; padding-left: 552px; width: 1024px; flex: none; }
.nav-ic { width: 14px; height: 14px; }
.nav-one { width: 9px; }
.page-box { width: 114px; height: 20px; margin-left: 11px; background: #fff; border: 1px solid #aaa; display: flex; align-items: center; justify-content: space-between; padding: 0 4px 0 3px; font-size: 13px; color: #333; }
.view-tools { display: flex; align-items: center; flex: 1; }
.vt { width: 24px; height: 18px; display: flex; align-items: center; justify-content: center; margin-right: 2px; }
.vt-on { background: #c6d9ef; }
.zoom-val { margin-left: 19px; width: 38px; color: #555; font-size: 13px; }
.zoom-caret { margin-left: 18px; }
.circ { width: 16px; height: 16px; }
.circ-minus { margin-left: 5px; }
.circ-plus { margin-left: 4px; }
.slider { width: 91px; height: 1px; margin-left: 6px; background: #444; position: relative; }
.slider-mark { position: absolute; left: 46px; top: -3px; width: 1px; height: 7px; background: #444; }
.slider-knob { position: absolute; left: 49px; top: -4px; width: 4px; height: 9px; background: #333; }

/* task bar */
.taskbar { height: 40px; flex: none; display: flex; align-items: center; background: linear-gradient(#d8d8d8, #cfcfcf); position: relative; font-size: 12.200px; color: #333; }
.win-logo { width: 16px; height: 16px; margin-left: 16px; }
.tv-ic { width: 17px; height: 16px; margin-left: 31px; }
.task { flex: none; height: 40px; display: flex; align-items: center; border-bottom: 2px solid #0f6cbd; white-space: nowrap; overflow: hidden; }
.t-ic { width: 16px; height: 20px; margin-right: 9px; }
.t-ic22 { width: 22px; height: 22px; margin-right: 5px; }
.t-ic24 { width: 24px; height: 24px; margin-right: 4px; }
.t-folder { width: 138px; margin-left: 23px; padding-left: 9px; }
.pin { height: 24px; width: 18px; }
.calc { margin-left: 20px; }
.mag { width: 24px; margin-left: 27px; }
.t-x { width: 138px; margin-left: 16px; padding-left: 6px; }
.t-s { width: 138px; margin-left: 9px; padding-left: 7px; }
.t-active { width: 146px; margin-left: 5px; padding-left: 10px; background: #e6e6e6; }
.t-active .t-ic24 { margin-right: 4px; }
.t-point { width: 138px; margin-left: 5px; padding-left: 6px; }
.point-ic { height: 26px; margin-right: 5px; }
.t-pdf { font: bold 6px "Liberation Sans", sans-serif; fill: #fff; text-anchor: middle; }
.tray { flex: 1; display: flex; align-items: center; height: 40px; padding-left: 20px; }
.tr { width: 16px; height: 18px; }
.tr2 { margin-left: 13px; }
.tr3 { margin-left: 8px; }
.tr4 { margin-left: 8px; }
.tr5 { margin-left: 7px; }
.tr6 { margin-left: 8px; }
.tr7 { margin-left: 11px; }
.tr8 { margin-left: 5px; }
.tr9 { margin-left: 8px; }
.tr10 { margin-left: 8px; }
.ime { margin-left: 7px; width: 17px; font-size: 15px; color: #111; }
.badge47 { width: 22px; height: 22px; margin-left: 8px; border-radius: 50%; background: #2fb567; color: #fff; font-size: 10px; font-weight: 700; text-align: center; line-height: 22px; }
.clock { width: 64px; margin-left: 8px; display: flex; flex-direction: column; align-items: center; line-height: 19px; font-size: 12px; color: #333; }
.notif { width: 16px; height: 16px; margin-left: 17px; }
```
